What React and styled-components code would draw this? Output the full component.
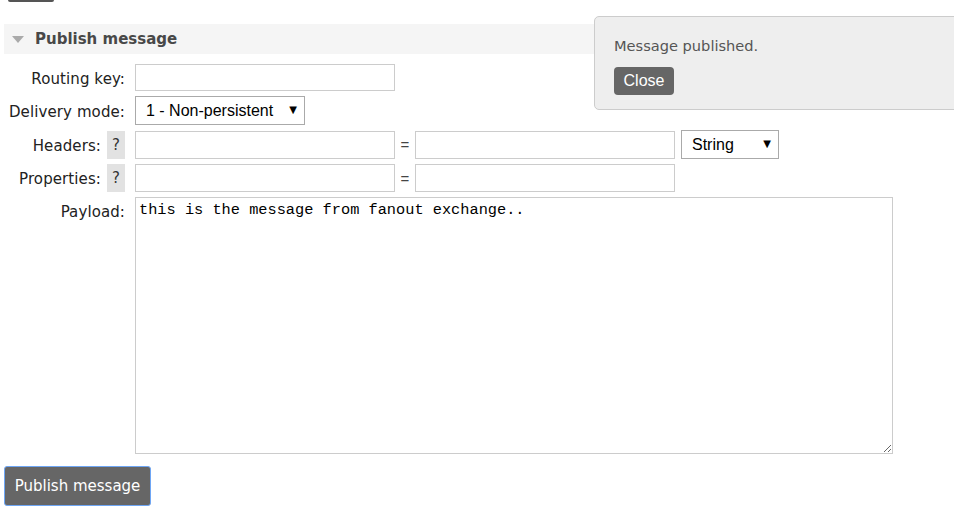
import styled, { createGlobalStyle } from 'styled-components';

const GlobalStyle = createGlobalStyle`
  html, body {
    margin: 0;
    padding: 0;
    background: #fff;
  }
  body {
    font-family: "DejaVu Sans", Verdana, sans-serif;
    color: #222;
  }
`;

const Page = styled.div`
  position: relative;
  width: 954px;
  height: 524px;
  overflow: hidden;
  padding: 0 0 0 4px;
  box-sizing: border-box;
`;

const PrevButtonEdge = styled.div`
  margin-left: 4px;
  width: 46px;
  height: 2px;
  background: #555;
  border-radius: 0 0 2px 2px;
`;

const SectionHeader = styled.h2`
  margin: 22px 0 0;
  height: 30px;
  display: flex;
  align-items: center;
  gap: 11px;
  padding-left: 8px;
  background: #f5f5f5;
  font-size: 15px;
  font-weight: bold;
  color: #484848;
`;

const Caret = styled.span`
  width: 0;
  height: 0;
  border-left: 6px solid transparent;
  border-right: 6px solid transparent;
  border-top: 7px solid #aaa;
  margin-top: 1px;
`;

const Form = styled.div`
  margin-top: 10px;
  display: grid;
  grid-template-columns: 121px auto;
  column-gap: 10px;
  row-gap: 5px;
  align-items: center;
`;

const LabelCell = styled.div`
  display: flex;
  justify-content: flex-end;
  align-items: ${p => (p.$top ? 'flex-start' : 'center')};
  align-self: stretch;
  padding-top: ${p => (p.$top ? '6px' : '2px')};
  gap: 6px;
  font-size: 15px;
  letter-spacing: 0.1px;
  color: #222;
  white-space: nowrap;
`;

const Help = styled.span`
  display: inline-flex;
  align-items: center;
  justify-content: center;
  width: 18px;
  height: 28px;
  margin-top: -2px;
  background: #e2e2e2;
  font-size: 15px;
  color: #333;
`;

const Field = styled.div`
  display: flex;
  align-items: center;
`;

const TextInput = styled.input`
  width: 260px;
  height: ${p => p.$h || 27}px;
  box-sizing: border-box;
  border: 1px solid #ccc;
  border-radius: 0;
  padding: 2px 4px;
  font-family: "Liberation Sans", Arial, sans-serif;
  font-size: 15px;
  outline: none;
`;

const Equals = styled.span`
  width: 20px;
  text-align: center;
  font-family: "Liberation Sans", Arial, sans-serif;
  font-size: 15px;
  color: #444;
`;

const SelectWrap = styled.div`
  position: relative;
  margin-left: ${p => p.$ml || 0}px;
`;

const Select = styled.select`
  appearance: none;
  width: ${p => p.$w}px;
  height: 29px;
  box-sizing: border-box;
  border: 1px solid #aaa;
  border-radius: 0;
  background: #fff;
  padding: 0 0 0 10px;
  font-family: "Liberation Sans", Arial, sans-serif;
  font-size: 16px;
  color: #000;
  outline: none;
`;

const Arrow = styled.span`
  position: absolute;
  right: 8px;
  top: 8px;
  font-size: 10px;
  color: #000;
  pointer-events: none;
  font-family: "DejaVu Sans", sans-serif;
`;

const Payload = styled.textarea`
  width: 758px;
  height: 257px;
  box-sizing: border-box;
  border: 1px solid #ccc;
  border-radius: 0;
  padding: 3px 3px;
  font-family: "Liberation Mono", "DejaVu Sans Mono", monospace;
  font-size: 15.3px;
  color: #000;
  resize: both;
  outline: none;
`;

const PublishButton = styled.button`
  margin-top: 12px;
  width: 147px;
  height: 40px;
  background: #666;
  color: #fff;
  border: 1px solid #6ea6f5;
  border-radius: 3px;
  font-family: "DejaVu Sans", Verdana, sans-serif;
  font-size: 15px;
  padding: 0;
`;

const Toast = styled.div`
  position: absolute;
  left: 594px;
  top: 16px;
  width: 380px;
  height: 94px;
  box-sizing: border-box;
  background: #eee;
  border: 1px solid #ccc;
  border-radius: 5px;
  padding: 20px 0 0 19px;
`;

const ToastText = styled.p`
  margin: 0;
  font-size: 14.6px;
  color: #555;
`;

const CloseButton = styled.button`
  margin-top: 13px;
  width: 60px;
  height: 28px;
  background: #666;
  color: #fff;
  border: none;
  border-radius: 4px;
  font-family: "Liberation Sans", Arial, sans-serif;
  font-size: 16px;
  padding: 0;
`;

export default function App() {
  return (
    <>
      <GlobalStyle />
      <Page>
        <PrevButtonEdge />
        <SectionHeader>
          <Caret />
          Publish message
        </SectionHeader>

        <Form>
          <LabelCell>Routing key:</LabelCell>
          <Field>
            <TextInput type="text" />
          </Field>

          <LabelCell>Delivery mode:</LabelCell>
          <Field>
            <SelectWrap>
              <Select $w={170} defaultValue="1">
                <option value="1">1 - Non-persistent</option>
                <option value="2">2 - Persistent</option>
              </Select>
              <Arrow>▼</Arrow>
            </SelectWrap>
          </Field>

          <LabelCell>
            Headers:<Help>?</Help>
          </LabelCell>
          <Field>
            <TextInput type="text" $h={28} />
            <Equals>=</Equals>
            <TextInput type="text" $h={28} />
            <SelectWrap $ml={6}>
              <Select $w={98} defaultValue="string">
                <option value="string">String</option>
                <option value="number">Number</option>
              </Select>
              <Arrow>▼</Arrow>
            </SelectWrap>
          </Field>

          <LabelCell>
            Properties:<Help>?</Help>
          </LabelCell>
          <Field>
            <TextInput type="text" $h={28} />
            <Equals>=</Equals>
            <TextInput type="text" $h={28} />
          </Field>

          <LabelCell $top>Payload:</LabelCell>
          <Field>
            <Payload defaultValue="this is the message from fanout exchange.." spellCheck={false} />
          </Field>
        </Form>

        <PublishButton>Publish message</PublishButton>

        <Toast>
          <ToastText>Message published.</ToastText>
          <CloseButton>Close</CloseButton>
        </Toast>
      </Page>
    </>
  );
}
